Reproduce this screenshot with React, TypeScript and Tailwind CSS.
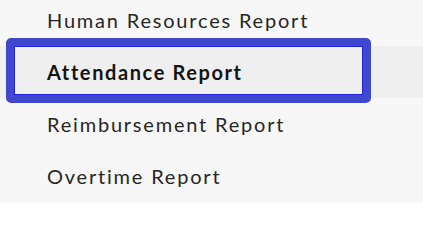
import React from "react";

const items = [
  { label: "Human Resources Report", active: false },
  { label: "Attendance Report", active: true },
  { label: "Reimbursement Report", active: false },
  { label: "Overtime Report", active: false },
];

export default function App() {
  return (
    <div
      className="w-[423px] h-[203px] overflow-hidden bg-[#f7f7f7]"
      style={{ fontFamily: "Lato, 'Noto Sans', sans-serif" }}
    >
      <ul className="-mt-[6px]">
        {items.map((item) => (
          <li
            key={item.label}
            className={`relative flex h-[52px] items-center pl-[47px] text-[20px] ${
              item.active
                ? "bg-[#efefef] font-bold text-[#141414] tracking-[0.08em]"
                : "text-[#262626] tracking-[0.09em]"
            }`}
          >
            {item.active && (
              <span className="pointer-events-none absolute left-[6px] top-[-8px] h-[65px] w-[365px] rounded-[5px] border-[8px] border-[#4048d0]">
                <span className="absolute inset-0 border border-[#2424e0]" />
              </span>
            )}
            <span className="relative">{item.label}</span>
          </li>
        ))}
      </ul>
    </div>
  );
}
